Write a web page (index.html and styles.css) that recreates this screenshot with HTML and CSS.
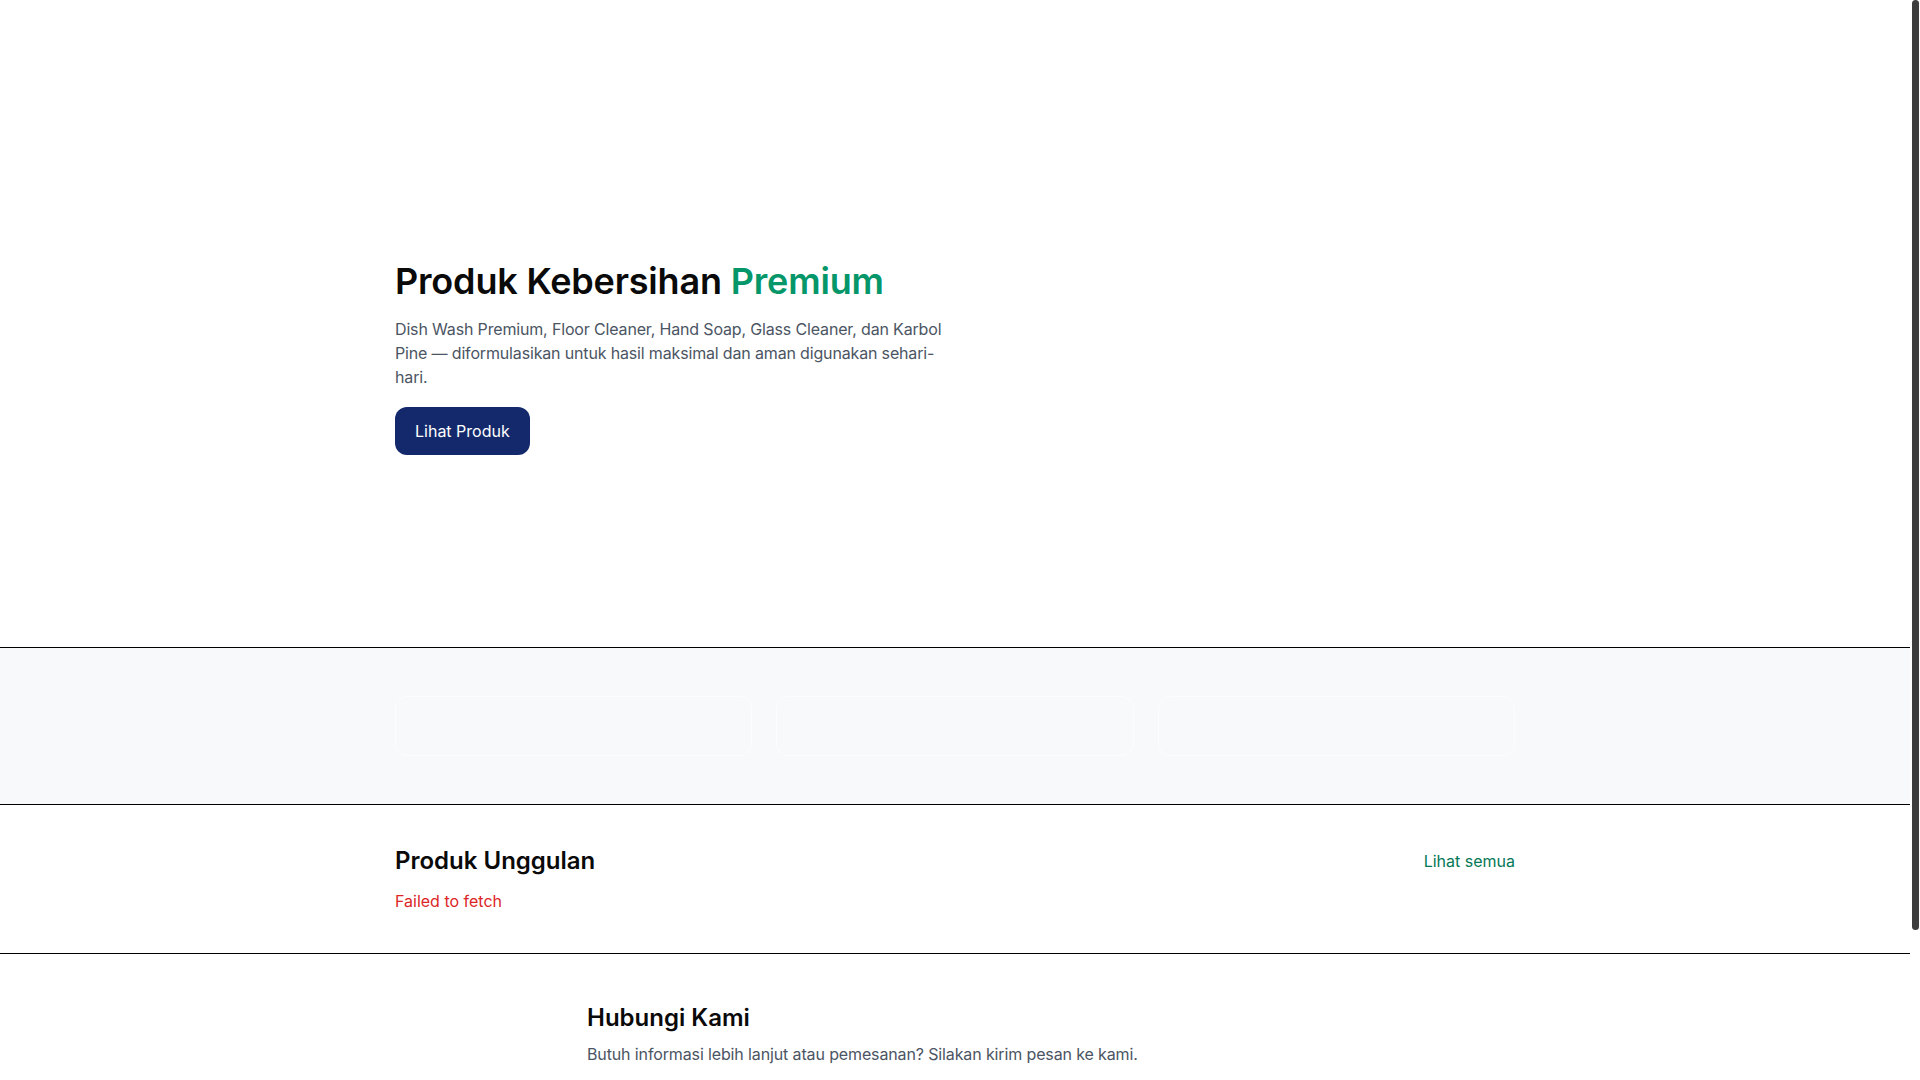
FILE: index.html
```html
<!DOCTYPE html>
<html lang="id">
<head>
<meta charset="utf-8">
<title>Produk Kebersihan Premium</title>
<link rel="stylesheet" href="styles.css">
</head>
<body>
<div class="page">
  <header class="site-header"></header>
  <main>
    <section class="hero">
      <div class="container hero-inner">
        <h1 class="hero-title">Produk Kebersihan <span class="accent">Premium</span></h1>
        <p class="hero-text">Dish Wash Premium, Floor Cleaner, Hand Soap, Glass Cleaner, dan Karbol Pine — diformulasikan untuk hasil maksimal dan aman digunakan sehari-hari.</p>
        <a class="btn-primary" href="#produk">Lihat Produk</a>
      </div>
    </section>

    <section class="features">
      <div class="container feature-grid">
        <div class="feature-card"></div>
        <div class="feature-card"></div>
        <div class="feature-card"></div>
      </div>
    </section>

    <section class="products" id="produk">
      <div class="container">
        <div class="section-head">
          <h2 class="section-title">Produk Unggulan</h2>
          <a class="link-all" href="#">Lihat semua</a>
        </div>
        <p class="error-text">Failed to fetch</p>
      </div>
    </section>

    <section class="contact">
      <div class="container-narrow">
        <h2 class="section-title">Hubungi Kami</h2>
        <p class="contact-text">Butuh informasi lebih lanjut atau pemesanan? Silakan kirim pesan ke kami.</p>
        <form class="contact-form">
          <div class="form-row">
            <input class="field" type="text" placeholder="Nama">
            <input class="field" type="email" placeholder="Email">
          </div>
          <textarea class="field field-area" placeholder="Pesan"></textarea>
        </form>
      </div>
    </section>
  </main>
</div>
<div class="scrollbar" aria-hidden="true"><div class="scrollbar-thumb"></div></div>
</body>
</html>
```

FILE: styles.css
```css
* { box-sizing: border-box; }

html, body {
  margin: 0;
  padding: 0;
  background: #ffffff;
}

body {
  font-family: Inter, "Noto Sans", "Liberation Sans", sans-serif;
  color: #111111;
  font-size: 16px;
  line-height: 24px;
}

.page {
  margin-right: 10px;
}

.scrollbar {
  position: fixed;
  top: 0;
  right: 0;
  width: 10px;
  height: 100vh;
  background: #ffffff;
}

.scrollbar-thumb {
  margin: 0 auto;
  width: 7px;
  height: 930px;
  background: #3c3c3c;
  border-radius: 4px;
}

.site-header {
  height: 72px;
}

.container {
  max-width: 1152px;
  margin: 0 auto;
  padding: 0 16px;
}

.container-narrow {
  max-width: 768px;
  margin: 0 auto;
  padding: 0 16px;
}

.hero {
  padding: 189px 0 192px;
  border-bottom: 1px solid #000;
}

.hero-title {
  margin: 0;
  font-size: 36px;
  line-height: 40px;
  font-weight: 600;
  letter-spacing: -0.005em;
  color: #0a0a0a;
}

.accent {
  color: #059669;
}

.hero-text {
  margin: 16px 0 0;
  max-width: 560px;
  color: #4b5563;
  letter-spacing: -0.01em;
}

.btn-primary {
  display: inline-block;
  margin-top: 18px;
  padding: 12px 20px;
  background: #13296b;
  color: #ffffff;
  border-radius: 12px;
  text-decoration: none;
}

.features {
  background: #f8f9fb;
  padding: 48px 0;
  border-bottom: 1px solid #000;
}

.feature-grid {
  display: grid;
  grid-template-columns: repeat(3, 1fr);
  gap: 24px;
}

.feature-card {
  height: 60px;
  border: 1px solid #fdfdfe;
  border-radius: 12px;
}

.products {
  padding: 40px 0;
  border-bottom: 1px solid #000;
}

.section-head {
  display: flex;
  justify-content: space-between;
  align-items: center;
}

.section-title {
  margin: 0;
  font-size: 24px;
  line-height: 32px;
  font-weight: 600;
  color: #0a0a0a;
}

.link-all {
  color: #047857;
  text-decoration: none;
}

.error-text {
  margin: 12px 0 0;
  color: #dc2626;
}

.contact {
  padding: 48px 0;
}

.contact-text {
  margin: 8px 0 0;
  color: #4b5563;
  letter-spacing: -0.008em;
}

.contact-form {
  margin-top: 24px;
  display: flex;
  flex-direction: column;
  gap: 12px;
}

.form-row {
  display: grid;
  grid-template-columns: 1fr 1fr;
  gap: 12px;
}

.field {
  font: inherit;
  height: 44px;
  padding: 10px 12px;
  border: 1px solid #e5e7eb;
  border-radius: 8px;
}

.field-area {
  height: 60px;
  resize: none;
}
```
